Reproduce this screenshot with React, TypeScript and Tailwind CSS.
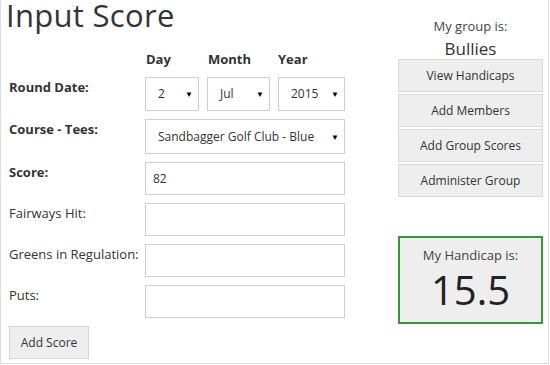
const groupButtons = ['View Handicaps', 'Add Members', 'Add Group Scores', 'Administer Group']

function Select({ value, width }: { value: string; width: string }) {
  return (
    <div
      className={`${width} h-full flex items-center justify-between pl-[12px] pr-[5px] border border-[#cfcfcf] bg-white text-[12px] text-[#333]`}
    >
      <span>{value}</span>
      <span className="text-[8px] text-black">▼</span>
    </div>
  )
}

function Row({ label, bold, children, h, mt }: { label: string; bold?: boolean; children: React.ReactNode; h: string; mt: string }) {
  return (
    <div className={`flex ${h} ${mt}`}>
      <div className={`w-[136px] pt-[1px] text-[13px] leading-[18px] ${bold ? 'font-bold' : ''}`}>{label}</div>
      <div className="flex gap-[8px] h-full">{children}</div>
    </div>
  )
}

function TextBox({ value }: { value?: string }) {
  return (
    <div className="w-[200px] h-full flex items-center px-[7px] border border-[#cfcfcf] bg-white text-[12px] text-[#333]">
      {value}
    </div>
  )
}

export default function App() {
  return (
    <div className="w-[549px] h-[364px] flex border-x border-b border-[#dddddd] bg-white text-[#333] font-['Open_Sans',sans-serif]">
      {/* Left: form */}
      <div className="w-[397px] pl-[8px] flex flex-col">
        <h1 className="h-[49px] -ml-[3px] text-[31px] leading-[30px] text-[#333] tracking-[0.3px]">Input Score</h1>
        <div className="flex h-[28px] pt-[1px] pl-[137px] text-[13px] font-bold leading-[18px]">
          <span className="w-[62px]">Day</span>
          <span className="w-[70px]">Month</span>
          <span>Year</span>
        </div>
        <Row label="Round Date:" bold h="h-[34px]" mt="mt-0">
          <Select value="2" width="w-[54px]" />
          <Select value="Jul" width="w-[63px]" />
          <Select value="2015" width="w-[67px]" />
        </Row>
        <Row label="Course - Tees:" bold h="h-[35px]" mt="mt-[8px]">
          <Select value="Sandbagger Golf Club - Blue" width="w-[200px]" />
        </Row>
        <Row label="Score:" bold h="h-[33px]" mt="mt-[8px]">
          <TextBox value="82" />
        </Row>
        <Row label="Fairways Hit:" h="h-[33px]" mt="mt-[8px]">
          <TextBox />
        </Row>
        <Row label="Greens in Regulation:" h="h-[33px]" mt="mt-[8px]">
          <TextBox />
        </Row>
        <Row label="Puts:" h="h-[33px]" mt="mt-[8px]">
          <TextBox />
        </Row>
        <button className="mt-[8px] w-[80px] h-[33px] border border-[#d4d4d4] bg-[#eeeeee] text-[12px] text-[#333]">
          Add Score
        </button>
      </div>

      {/* Right: group panel */}
      <div className="w-[145px] flex flex-col items-stretch">
        <div className="mt-[18px] text-center text-[13px] leading-[16px] text-[#444]">My group is:</div>
        <div className="mt-[5px] text-center text-[17px] leading-[20px] text-[#333]">Bullies</div>
        <div className="mt-0 flex flex-col gap-[2px]">
          {groupButtons.map((b) => (
            <div
              key={b}
              className="h-[33px] flex items-center justify-center border border-[#d8d8d8] bg-[#eeeeee] text-[12px] text-[#333]"
            >
              {b}
            </div>
          ))}
        </div>
        <div className="mt-[39px] h-[88px] border-2 border-[#3a943a] bg-[#eeeeee] flex flex-col items-center">
          <div className="mt-[9px] text-[13px] leading-[16px] text-[#444]">My Handicap is:</div>
          <div className="mt-[3px] text-[40px] leading-[48px] text-[#222]">15.5</div>
        </div>
      </div>
    </div>
  )
}
